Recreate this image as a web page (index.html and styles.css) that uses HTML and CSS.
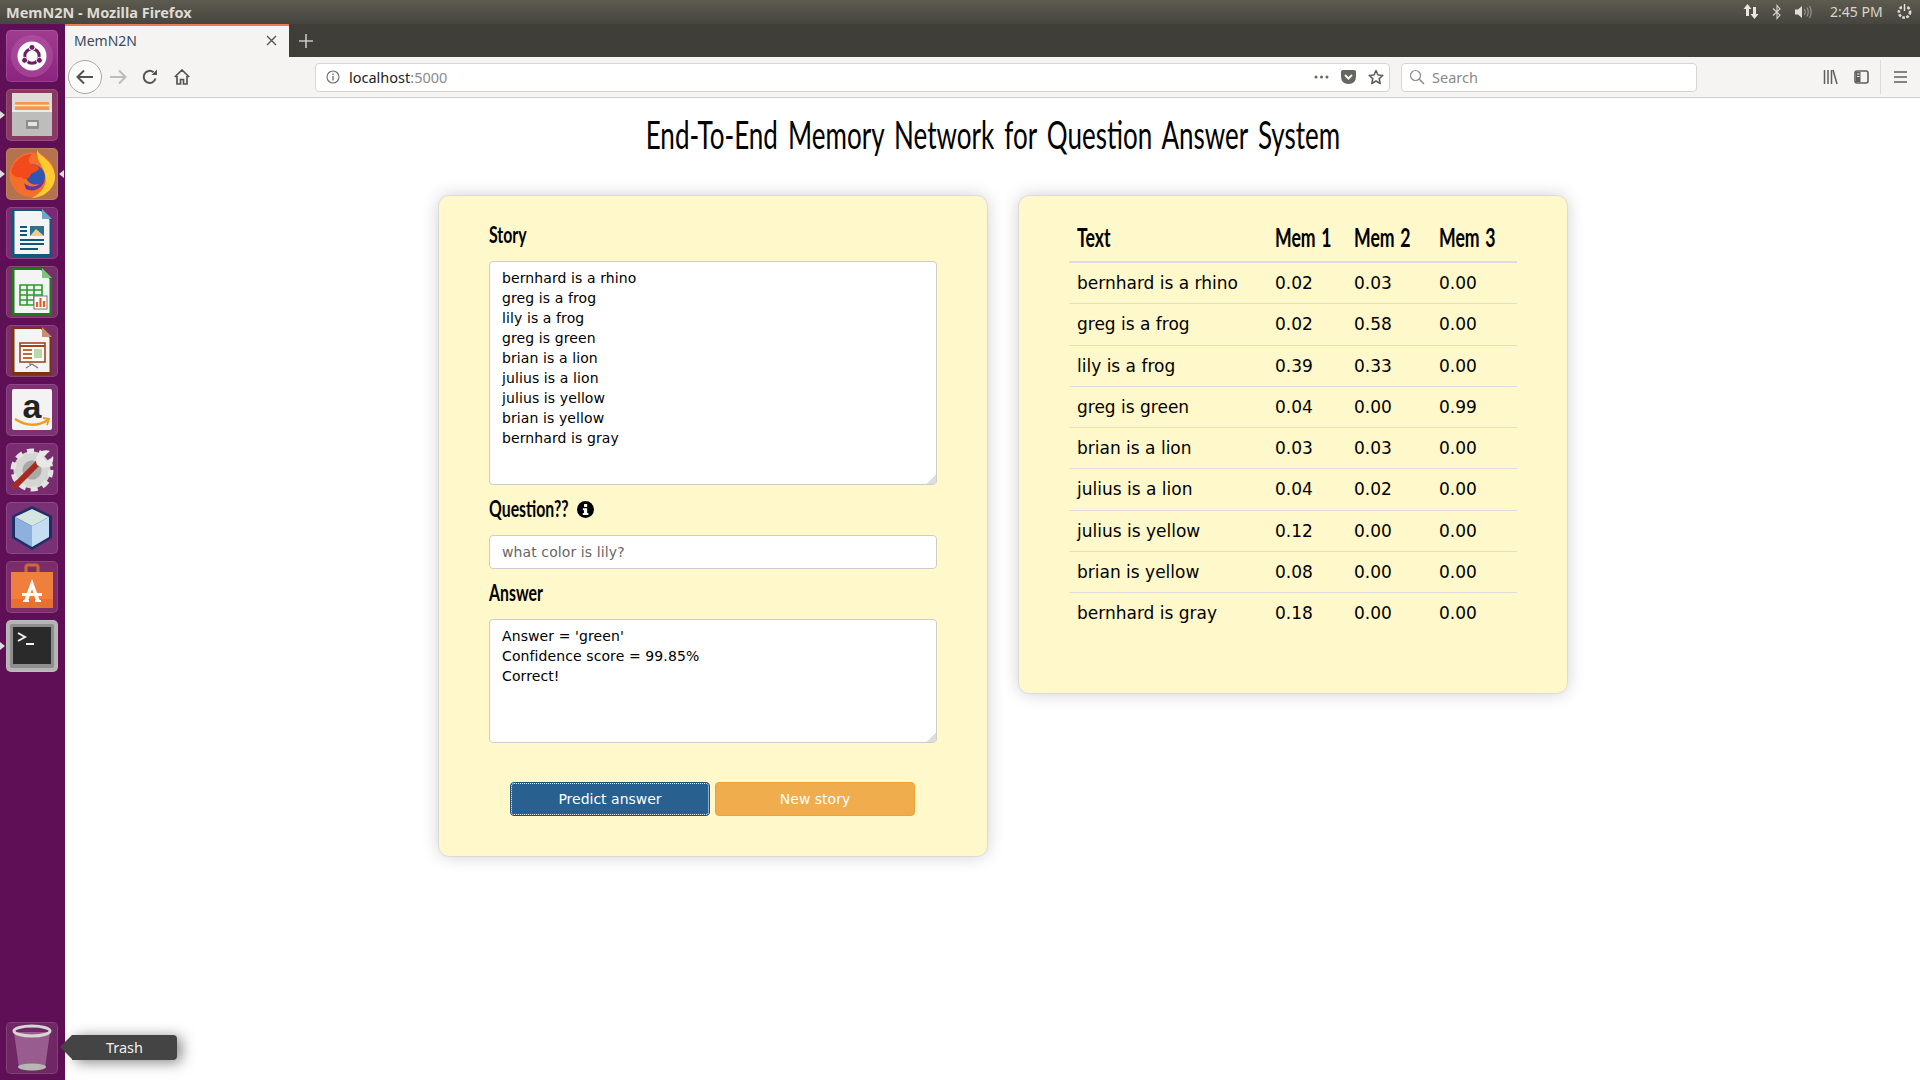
FILE: index.html
```html
<!DOCTYPE html>
<html lang="en">
<head>
<meta charset="utf-8">
<title>MemN2N</title>
<link rel="stylesheet" href="styles.css">
</head>
<body>
<header class="panel">
  <span class="panel-title">MemN2N - Mozilla Firefox</span>
  <div class="tray">
    <svg class="t-net" width="16" height="18" viewBox="0 0 16 18"><path d="M4.5 1 L8.5 6 H6 V13 H3 V6 H.5Z M11.5 16 L7.5 11 H10 V4 H13 V11 H15.5Z" fill="#e8e6e0"/></svg>
    <svg class="t-bt" width="10" height="16" viewBox="0 0 10 16"><path d="M1 4.5 L8 11 L5 14.5 V1.5 L8 5 L1 11.5" fill="none" stroke="#d8d6d0" stroke-width="1.1"/></svg>
    <svg class="t-vol" width="20" height="16" viewBox="0 0 20 16"><path d="M1 5.5 H4 L8 2 V14 L4 10.5 H1Z" fill="#e0ded8"/><path d="M10.5 5 Q12 8 10.5 11 M13 3.5 Q15.5 8 13 12.5 M15.5 2 Q18.8 8 15.5 14" fill="none" stroke="#9d9b94" stroke-width="1.1"/></svg>
    <span class="clock">2:45 PM</span>
    <svg class="t-pow" width="17" height="17" viewBox="0 0 17 17"><circle cx="8.5" cy="9" r="5.6" fill="none" stroke="#e0ded8" stroke-width="2.6" stroke-dasharray="2.6 1.5"/><path d="M8.5 1 V8" stroke="#46453f" stroke-width="4"/><path d="M8.5 1 V8" stroke="#e8e6e0" stroke-width="1.6"/></svg>
  </div>
</header>

<div class="desktop">
  <nav class="launcher">
    <div class="tile tile-ubuntu"><svg viewBox="0 0 52 52"><circle cx="26" cy="26" r="21" fill="#b65aa6" opacity=".5"/><circle cx="26" cy="26" r="14.5" fill="#fff"/><circle cx="26" cy="26" r="7.2" fill="none" stroke="#6f1e62" stroke-width="3"/><circle cx="26" cy="17.4" r="3" fill="#6f1e62" stroke="#fff"/><circle cx="18.6" cy="30.3" r="3" fill="#6f1e62" stroke="#fff"/><circle cx="33.4" cy="30.3" r="3" fill="#6f1e62" stroke="#fff"/></svg></div>
    <div class="tile tile-files"><i class="pip pip-l"></i><svg viewBox="0 0 52 52"><path d="M6 4 H46 V21 H6Z" fill="#dcdcda"/><path d="M9 13 H43 V24 H9Z" fill="#ef9a50"/><path d="M9 16.500 H43" stroke="#fbe8cf" stroke-width="1.500"/><path d="M6 21 H46 V47 H6Z" fill="#bdbdbb"/><path d="M6 21 H46 V23 H6Z" fill="#ececea"/><rect x="20" y="31" width="13" height="9" rx="1" fill="#8e8e8c"/><rect x="22" y="33" width="9" height="4" fill="#e4e4e2"/></svg></div>
    <div class="tile tile-firefox"><i class="pip pip-l"></i><i class="pip pip-r"></i><svg viewBox="0 0 52 52"><circle cx="26" cy="27" r="22.500" fill="#f4702a"/><path d="M31 2 C33 8 47 12 49 27 C50 39 40 49 26 50 C36 45 42 36 39 26 C37 18 30 12 31 2Z" fill="#ffcb30"/><path d="M20 17 C26 14 38 18 39 28 C39 35 32 38 26 36 C20 34 18 26 20 17Z" fill="#2f55b5"/><path d="M18 35 C24 41 34 39 39 30 C38 40 28 45 20 41Z" fill="#6a34a0"/><path d="M5 24 C7 13 17 6 26 6 C22 10 22 14 25 16 C30 17 33 18 33 21 C30 25 25 24 24 28 C22 32 17 32 15 29 C10 30 7 28 5 24Z" fill="#f34a1c"/></svg></div>
    <div class="tile tile-writer"><svg viewBox="0 0 52 52"><path d="M6 2 H36 L46 12 V50 H6Z" fill="#0c5a78"/><path d="M8.500 4 H35 L43.500 13 V47 H8.500Z" fill="#f4f4f4"/><path d="M36 2 L46 12 H36Z" fill="#6ea9c4"/><rect x="24" y="19" width="14" height="10" fill="#2f6f92"/><path d="M24 29 L30 22 L38 29Z" fill="#f0d080"/><path d="M14 20 H21 M14 24 H21 M14 28 H21 M14 33 H38 M14 37 H38 M14 42 H32" stroke="#0c5a78" stroke-width="2"/></svg></div>
    <div class="tile tile-calc"><svg viewBox="0 0 52 52"><path d="M6 2 H36 L46 12 V50 H6Z" fill="#1c7a1c"/><path d="M8.500 4 H35 L43.500 13 V47 H8.500Z" fill="#f4f4f4"/><path d="M36 2 L46 12 H36Z" fill="#7cc47c"/><path d="M14 19 H36 V39 H14Z M14 24 H36 M14 29 H36 M14 34 H36 M21 19 V39 M28 19 V39" fill="none" stroke="#2a9a2a" stroke-width="1.6"/><rect x="28" y="30" width="13" height="13" fill="#fff" stroke="#777"/><path d="M31 41 V36 M34.500 41 V32 M38 41 V35" stroke="#e06020" stroke-width="2.2"/></svg></div>
    <div class="tile tile-impress"><svg viewBox="0 0 52 52"><path d="M6 2 H36 L46 12 V50 H6Z" fill="#7c3410"/><path d="M8.500 4 H35 L43.500 13 V47 H8.500Z" fill="#f4f4f4"/><path d="M36 2 L46 12 H36Z" fill="#c8906c"/><rect x="14" y="18" width="25" height="19" fill="#fff" stroke="#a2461a" stroke-width="1.6"/><path d="M14 21 H39" stroke="#a2461a" stroke-width="2"/><path d="M17 25 H26 M17 29 H26 M17 33 H26" stroke="#c86a30" stroke-width="2"/><rect x="28" y="24" width="8" height="9" fill="#b8d8a8"/><path d="M24 37 V41 M26 39 L20 43 M26 39 L32 43" stroke="#777" stroke-width="1.2"/></svg></div>
    <div class="tile tile-amazon"><svg viewBox="0 0 52 52"><rect x="6" y="5" width="40" height="41" rx="2" fill="#f3f3f3"/><text x="26" y="34" class="amazon-a">a</text><path d="M9 35 Q26 46 42 36" fill="none" stroke="#f29a1f" stroke-width="2.4"/><path d="M37 34 L43 35 L41 41" fill="none" stroke="#f29a1f" stroke-width="1.8"/></svg></div>
    <div class="tile tile-settings"><svg viewBox="0 0 52 52"><circle cx="26" cy="27" r="10" fill="#a9a9a7"/><circle cx="26" cy="27" r="14" fill="none" stroke="#d5d5d3" stroke-width="9"/><circle cx="26" cy="27" r="19" fill="none" stroke="#e4e4e2" stroke-width="5" stroke-dasharray="7 5"/><path d="M9 43 L33 19" stroke="#a52a20" stroke-width="6" stroke-linecap="round"/><path d="M31 22 C27 13 35 5 44 8 L37 14 L41 19 L47 13 C49 22 40 28 33 23Z" fill="#e8e8e6"/></svg></div>
    <div class="tile tile-box"><svg viewBox="0 0 52 52"><path d="M26 4 L46 14 V36 L26 48 L6 36 V14Z" fill="#1d2f66"/><path d="M26 7 L43 15 L26 24 L9 15Z" fill="#d5e5e2"/><path d="M9 15 L26 24 V45 L9 35Z" fill="#8db0de"/><path d="M43 15 L26 24 V45 L43 35Z" fill="#c6dcf2"/></svg></div>
    <div class="tile tile-store"><svg viewBox="0 0 52 52"><path d="M20 14 V6 Q20 4 22 4 H30 Q32 4 32 6 V14" fill="none" stroke="#c96a38" stroke-width="3"/><path d="M5 11 H47 V47 H5Z" fill="#ef7f3c"/><path d="M5 38 H47 V47 H5Z" fill="#e87030"/><path d="M26 18 L34 40 H30 L26 28 L22 40 H18Z" fill="#fff"/><path d="M16 32 H36 V35 H16Z M17 39 H23 V41 H17Z M29 39 H35 V41 H29Z" fill="#fff"/></svg></div>
    <div class="tile tile-term"><i class="pip pip-l"></i><svg viewBox="0 0 52 52"><rect x="4" y="4" width="44" height="44" rx="2" fill="#8e8e8c"/><rect x="7" y="7" width="38" height="37" fill="#2a2a2a"/><path d="M12 13 L19 17 L12 21" fill="none" stroke="#f2f2f2" stroke-width="2"/><path d="M20 24 H28" stroke="#f2f2f2" stroke-width="2"/></svg></div>
    <div class="tile tile-trash"><svg viewBox="0 0 52 52"><path d="M8 10 L13 46 Q26 51 39 46 L44 10Z" fill="#a5709c" opacity=".75"/><ellipse cx="26" cy="45" rx="14" ry="3.4" fill="#b8b8b2"/><ellipse cx="26" cy="9" rx="18" ry="5" fill="none" stroke="#d6d6d2" stroke-width="3"/></svg></div>
    <div class="tooltip">Trash</div>
  </nav>

  <div class="browser">
    <div class="tabstrip">
      <div class="tab">
        <span class="tab-title">MemN2N</span>
        <svg class="tab-x" width="11" height="11" viewBox="0 0 11 11"><path d="M1 1 L10 10 M10 1 L1 10" stroke="#55544f" stroke-width="1.4"/></svg>
      </div>
      <svg class="new-tab" width="14" height="14" viewBox="0 0 14 14"><path d="M7 0 V14 M0 7 H14" stroke="#c8c7c2" stroke-width="1.6"/></svg>
    </div>
    <div class="toolbar">
      <div class="back"><svg width="18" height="16" viewBox="0 0 18 16"><path d="M8 1.500 L1.500 8 L8 14.500 M1.500 8 H17" fill="none" stroke="#55544f" stroke-width="2"/></svg></div>
      <svg class="fwd" width="18" height="16" viewBox="0 0 18 16"><path d="M10 1.500 L16.500 8 L10 14.500 M16.500 8 H1" fill="none" stroke="#bdbcb8" stroke-width="2"/></svg>
      <svg class="reload" width="16" height="16" viewBox="0 0 16 16"><path d="M13.500 9.500 A6 6 0 1 1 11.500 3.200" fill="none" stroke="#55544f" stroke-width="2"/><path d="M9.500 6 H15 V.5Z" fill="#55544f"/></svg>
      <svg class="home" width="16" height="16" viewBox="0 0 16 16"><path d="M.8 8 L8 1 L15.200 8 M3 7 V15 H6.500 V10.500 H9.500 V15 H13 V7" fill="none" stroke="#55544f" stroke-width="1.700"/></svg>
      <div class="urlbar">
        <svg class="info" width="14" height="14" viewBox="0 0 14 14"><circle cx="7" cy="7" r="6" fill="none" stroke="#6d6d6a" stroke-width="1.100"/><path d="M7 6 V10.500 M7 3.500 V5" stroke="#6d6d6a" stroke-width="1.300"/></svg>
        <span class="host">localhost<span class="port">:5000</span></span>
        <svg class="dots" width="15" height="4" viewBox="0 0 15 4"><circle cx="2" cy="2" r="1.500" fill="#66665f"/><circle cx="7.500" cy="2" r="1.500" fill="#66665f"/><circle cx="13" cy="2" r="1.500" fill="#66665f"/></svg>
        <svg class="pocket" width="15" height="14" viewBox="0 0 15 14"><path d="M0 2 Q0 0 2 0 H13 Q15 0 15 2 V6 Q15 14 7.500 14 Q0 14 0 6Z" fill="#66665f"/><path d="M4 5 L7.500 8.500 L11 5" fill="none" stroke="#f5f4f2" stroke-width="2"/></svg>
        <svg class="star" width="16" height="16" viewBox="0 0 16 16"><path d="M8 1.500 L10 6 L14.800 6.500 L11.200 9.700 L12.200 14.500 L8 12 L3.800 14.500 L4.800 9.700 L1.200 6.500 L6 6Z" fill="none" stroke="#5f5f5a" stroke-width="1.600" stroke-linejoin="round"/></svg>
      </div>
      <div class="searchbar">
        <svg width="16" height="16" viewBox="0 0 16 16"><circle cx="6.500" cy="6.500" r="5" fill="none" stroke="#8a8a86" stroke-width="1.200"/><path d="M10 10 L15 15" stroke="#8a8a86" stroke-width="1.400"/></svg>
        <span class="search-text">Search</span>
      </div>
      <svg class="lib" width="15" height="16" viewBox="0 0 15 16"><path d="M1.500 1 V15 M5 1 V15 M8.500 1 V15 M10 1 L14 15" stroke="#5f5f5a" stroke-width="1.500" fill="none"/></svg>
      <svg class="side" width="15" height="14" viewBox="0 0 15 14"><rect x="1" y="1" width="13" height="12" rx="2" fill="none" stroke="#5f5f5a" stroke-width="1.600"/><rect x="2" y="2" width="4.500" height="10" fill="#5f5f5a"/><path d="M3 4 H5.500 M3 6.500 H5.500" stroke="#f5f4f2"/></svg>
      <span class="sep"></span>
      <svg class="menu" width="13" height="12" viewBox="0 0 13 12"><path d="M0 1 H13 M0 6 H13 M0 11 H13" stroke="#5f5f5a" stroke-width="1.600"/></svg>
    </div>

    <main class="page">
      <h1 class="page-title"><span class="squeeze">End-To-End Memory Network for Question Answer System</span></h1>
      <div class="cards">
        <section class="card card-form">
          <label class="hand" for="story"><span class="squeeze">Story</span></label>
          <textarea id="story" class="control story" spellcheck="false">bernhard is a rhino
greg is a frog
lily is a frog
greg is green
brian is a lion
julius is a lion
julius is yellow
brian is yellow
bernhard is gray</textarea>
          <label class="hand follow" for="question"><span class="q-text"><span class="squeeze">Question??</span></span><svg class="q-info" width="17" height="17" viewBox="0 0 17 17"><circle cx="8.500" cy="8.500" r="8.500" fill="#000"/><rect x="7" y="3" width="3.200" height="3" rx=".5" fill="#fff"/><path d="M5.800 7.200 H10.200 V12 H11.400 V14 H5.800 V12 H7 V9.200 H5.800Z" fill="#fff"/></svg></label>
          <input id="question" class="control question" type="text" placeholder="what color is lily?">
          <label class="hand follow" for="answer"><span class="squeeze">Answer</span></label>
          <textarea id="answer" class="control answer" spellcheck="false">Answer = 'green'
Confidence score = 99.85%
Correct!</textarea>
          <div class="buttons">
            <button class="btn btn-primary" type="button">Predict answer</button>
            <button class="btn btn-warning" type="button">New story</button>
          </div>
        </section>
        <section class="card card-table">
          <table class="mem">
            <colgroup><col class="c-text"><col class="c-m1"><col class="c-m2"><col class="c-m3"></colgroup>
            <thead><tr><th><span class="squeeze">Text</span></th><th><span class="squeeze">Mem 1</span></th><th><span class="squeeze">Mem 2</span></th><th><span class="squeeze">Mem 3</span></th></tr></thead>
            <tbody>
              <tr><td>bernhard is a rhino</td><td>0.02</td><td>0.03</td><td>0.00</td></tr>
              <tr><td>greg is a frog</td><td>0.02</td><td>0.58</td><td>0.00</td></tr>
              <tr><td>lily is a frog</td><td>0.39</td><td>0.33</td><td>0.00</td></tr>
              <tr><td>greg is green</td><td>0.04</td><td>0.00</td><td>0.99</td></tr>
              <tr><td>brian is a lion</td><td>0.03</td><td>0.03</td><td>0.00</td></tr>
              <tr><td>julius is a lion</td><td>0.04</td><td>0.02</td><td>0.00</td></tr>
              <tr><td>julius is yellow</td><td>0.12</td><td>0.00</td><td>0.00</td></tr>
              <tr><td>brian is yellow</td><td>0.08</td><td>0.00</td><td>0.00</td></tr>
              <tr><td>bernhard is gray</td><td>0.18</td><td>0.00</td><td>0.00</td></tr>
            </tbody>
          </table>
        </section>
      </div>
    </main>
  </div>
</div>
</body>
</html>
```

FILE: styles.css
```css
* { box-sizing: border-box; }
html, body { margin: 0; height: 100%; }
body {
  width: 1920px;
  height: 1080px;
  overflow: hidden;
  display: flex;
  flex-direction: column;
  background: #fff;
  font-family: "DejaVu Sans", sans-serif;
  color: #000;
}

/* top panel */
.panel {
  height: 24px;
  flex: none;
  display: flex;
  align-items: center;
  justify-content: space-between;
  padding: 0 7px 1px 6px;
  background: linear-gradient(#5d5b4f, #46453f);
  color: #dfdbd2;
  font-family: "Noto Sans", sans-serif;
  font-size: 14.5px;
}
.panel-title { font-weight: 700; color: #dfdbd2; }
.tray { display: flex; align-items: center; }
.t-bt { margin-left: 13px; }
.t-vol { margin-left: 12px; }
.clock { margin-left: 16px; font-size: 14px; color: #d8d5cc; width: 53px; white-space: nowrap; }
.t-pow { margin-left: 13px; }

.desktop { flex: 1; display: flex; min-height: 0; }

/* launcher */
.launcher {
  position: relative;
  width: 65px;
  flex: none;
  display: flex;
  flex-direction: column;
  align-items: flex-start;
  gap: 7px;
  padding: 6px 0 0 6px;
  background: #5f0f55;
}
.tile {
  position: relative;
  width: 52px;
  height: 52px;
  flex: none;
  border-radius: 5px;
  box-shadow: inset 0 0 0 1px rgba(255,255,255,.12);
}
.tile svg { display: block; width: 52px; height: 52px; }
.tile-ubuntu { background: linear-gradient(#a03d90, #8a2480); }
.tile-files { background: #8a3a62; }
.tile-firefox { background: #b5724e; }
.tile-writer { background: #7b2a73; }
.tile-calc { background: #78306a; }
.tile-impress { background: #7c2e68; }
.tile-amazon { background: #7d3274; }
.tile-settings { background: #7a2c70; }
.tile-box { background: #7a3074; }
.tile-store { background: #7c2c68; }
.tile-term { background: #b5b3b3; }
.tile-trash { position: absolute; left: 6px; top: 998px; background: rgba(255,255,255,.1); }
.pip {
  position: absolute;
  top: 22px;
  width: 0;
  height: 0;
  border-top: 4px solid transparent;
  border-bottom: 4px solid transparent;
}
.pip-l { left: -6px; border-left: 5px solid #ddd; }
.pip-r { right: -6px; border-right: 5px solid #ddd; }
.amazon-a {
  font-family: "Liberation Sans", sans-serif;
  font-weight: 700;
  font-size: 34px;
  fill: #222;
  text-anchor: middle;
}
.tooltip {
  position: absolute;
  left: 72px;
  top: 1011px;
  width: 105px;
  height: 25px;
  z-index: 3;
  display: flex;
  align-items: center;
  justify-content: center;
  padding-bottom: 2px;
  background: #444;
  border-radius: 0 4px 4px 0;
  color: #f0f0f0;
  font-family: "Noto Sans", sans-serif;
  font-size: 14.5px;
  box-shadow: 4px 2px 14px rgba(0,0,0,.5);
}
.tooltip::before {
  content: "";
  position: absolute;
  left: -12px;
  top: 0;
  width: 0;
  height: 0;
  border-top: 12.5px solid transparent;
  border-bottom: 12.5px solid transparent;
  border-right: 12px solid #444;
}

/* browser */
.browser { flex: 1; min-width: 0; display: flex; flex-direction: column; }
.tabstrip {
  height: 33px;
  flex: none;
  display: flex;
  align-items: center;
  background: #3f3e39;
}
.tab {
  width: 224px;
  height: 33px;
  display: flex;
  align-items: center;
  justify-content: space-between;
  padding: 0 12px 2px 9px;
  background: #f5f4f2;
  border-top: 2px solid #ee7a52;
  font-family: "Noto Sans", sans-serif;
  font-size: 14px;
  color: #3a4a5e;
}
.new-tab { margin-left: 10px; }
.toolbar {
  height: 41px;
  flex: none;
  display: flex;
  align-items: center;
  background: #f5f4f2;
  border-bottom: 1px solid #cccbc8;
  padding-left: 3px;
  font-family: "Noto Sans", sans-serif;
}
.back {
  width: 34px;
  height: 34px;
  flex: none;
  display: flex;
  align-items: center;
  justify-content: center;
  border: 1px solid #a9a8a5;
  border-radius: 50%;
  background: #fbfbfa;
}
.fwd { margin-left: 7px; }
.reload { margin-left: 15px; }
.home { margin-left: 16px; }
.urlbar {
  width: 1075px;
  height: 29px;
  margin-left: 125px;
  display: flex;
  align-items: center;
  padding: 0 5px 0 10px;
  background: #fff;
  border: 1px solid #d6d5d2;
  border-radius: 4px;
  font-size: 14.5px;
}
.host { margin-left: 9px; color: #222; }
.port { color: #8b8b88; }
.dots { margin-left: auto; }
.pocket { margin-left: 12px; }
.star { margin-left: 12px; }
.searchbar {
  width: 296px;
  height: 29px;
  margin-left: 11px;
  display: flex;
  align-items: center;
  gap: 7px;
  padding-left: 7px;
  background: #fff;
  border: 1px solid #d6d5d2;
  border-radius: 4px;
  font-size: 14.5px;
  color: #8a8a86;
}
.lib { margin-left: 126px; }
.side { margin-left: 16px; }
.sep { width: 1px; height: 34px; margin-left: 11px; background: #dcdbd8; }
.menu { margin-left: 13px; }

/* page */
.page { flex: 1; min-height: 0; overflow: hidden; }
.hand, .page-title, .mem th { font-family: "Lato", sans-serif; white-space: nowrap; }
.squeeze { display: inline-block; transform-origin: left center; transform: scaleX(.72); }
.page-title {
  margin: 0;
  height: 98px;
  padding-top: 14px;
  text-align: center;
  font-size: 38px;
  line-height: 44px;
  font-weight: 400;
  word-spacing: 5px;
}
.page-title .squeeze { transform-origin: center; transform: scaleX(.685); }
.cards { display: flex; gap: 32px; padding-left: 374px; align-items: flex-start; }
.card {
  width: 548px;
  flex: none;
  background: #fff8cb;
  border-radius: 10px;
  box-shadow: 0 0 18px rgba(0,0,0,.2), 0 0 0 1px rgba(0,0,0,.06);
}
.card-form { height: 660px; padding: 24px 50px 0 50px; }
.hand { display: block; height: 30px; line-height: 30px; margin-bottom: 11px; font-size: 22px; font-weight: 700; }
.follow { margin-top: 9px; }
.q-text { display: inline-block; width: 88px; }
.q-info { vertical-align: -1px; }
.control {
  display: block;
  width: 100%;
  margin: 0;
  padding: 6px 12px;
  background: #fff;
  border: 1px solid #ccc;
  border-radius: 4px;
  font-family: "DejaVu Sans", sans-serif;
  font-size: 14px;
  line-height: 20px;
  letter-spacing: .1px;
  color: #000;
}
.control::-webkit-resizer { background: linear-gradient(135deg, transparent 68%, #ddd 68%); }
.story { height: 224px; }
.question { height: 34px; }
.question::placeholder { color: #666; opacity: 1; }
.answer { height: 124px; }
.buttons { display: flex; gap: 5px; margin: 39px 0 0 21px; }
.btn {
  width: 200px;
  height: 34px;
  padding: 0;
  border-radius: 4px;
  font-family: "DejaVu Sans", sans-serif;
  font-size: 14px;
  color: #fff;
  border: 1px solid;
}
.btn-primary { background: #286090; border-color: #204d74; outline: 1px dotted #fff; outline-offset: -2px; }
.btn-warning { background: #f0ad4e; border-color: #eea236; }

.card-table { height: 497px; padding: 17px 50px 0 50px; }
.mem { width: 448px; table-layout: fixed; border-collapse: collapse; font-size: 17px; line-height: 24.28px; }
.c-text { width: 198px; }
.c-m1 { width: 79px; }
.c-m2 { width: 85px; }
.c-m3 { width: 86px; }
.mem th {
  padding: 8px;
  line-height: 32px;
  text-align: left;
  font-size: 26px;
  font-weight: 700;
  word-spacing: 2px;
  border-bottom: 2px solid #ddd;
}
.mem th .squeeze { transform: scaleX(.68); }
.mem td { padding: 8px; border-top: 1px solid #ddd; }
.mem tbody tr:first-child td { border-top: 0; }
```
